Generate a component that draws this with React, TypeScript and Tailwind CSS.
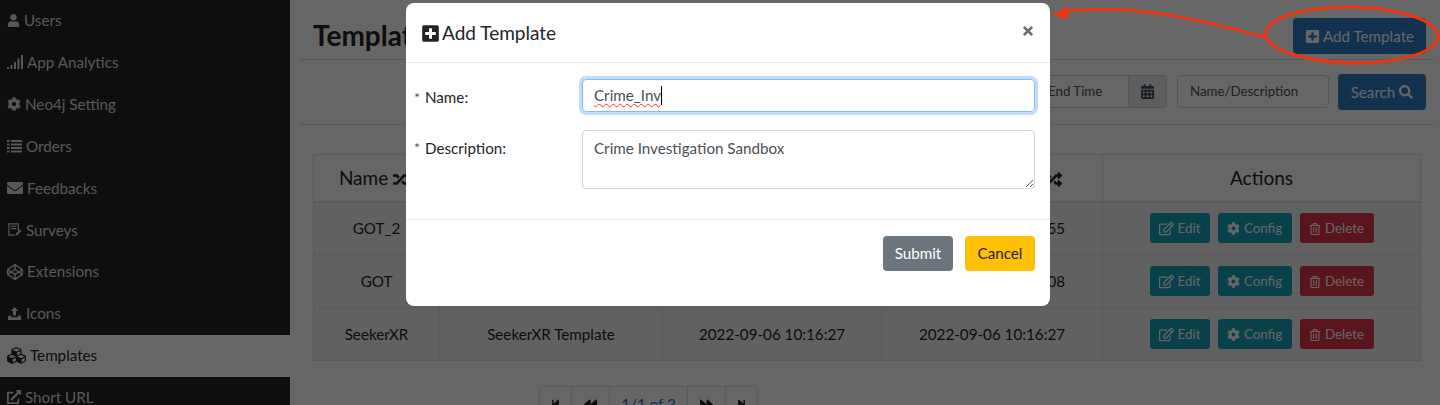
import type { ReactNode } from "react";
import {
  FaBackward, FaCalendarAlt, FaCodepen, FaCog, FaCubes, FaEnvelope, FaExternalLinkAlt, FaForward,
  FaPlusSquare, FaRandom, FaRegEdit, FaRegTrashAlt, FaSearch,
  FaStepBackward, FaStepForward, FaTimes, FaUser,
} from "react-icons/fa";

function SignalIcon() {
  return (
    <svg viewBox="0 0 16 14" className="w-[16px] h-[14px]" fill="currentColor">
      <rect x="0" y="12" width="2" height="2" />
      <rect x="3.5" y="10" width="2" height="4" />
      <rect x="7" y="7" width="2" height="7" />
      <rect x="10.5" y="3.5" width="2" height="10.5" />
      <rect x="14" y="0" width="2" height="14" />
    </svg>
  );
}

function ListIcon() {
  return (
    <svg viewBox="0 0 15 14" className="w-[15px] h-[14px]" fill="currentColor">
      <path d="M0 1h2.5v2H0zM4 1h11v2H4zM0 4.5h2.5v2H0zM4 4.5h11v2H4zM0 8h2.5v2H0zM4 8h11v2H4zM0 11.5h2.5v2H0zM4 11.5h11v2H4z" />
    </svg>
  );
}

function SurveyIcon() {
  return (
    <svg viewBox="0 0 16 16" className="w-[15px] h-[16px]" fill="none" stroke="currentColor" strokeWidth="1.2">
      <path d="M12 9V1.5H2v12h6" />
      <path d="M4 4h6M4 6.5h6" />
      <path d="M9 14l.6-2.4 4.2-4.2 1.6 1.6-4.2 4.2z" fill="currentColor" stroke="none" />
    </svg>
  );
}

function UploadIcon() {
  return (
    <svg viewBox="0 0 16 16" className="w-[15px] h-[15px]" fill="currentColor">
      <path d="M8 1l4 4.4H9.6V10H6.4V5.4H4z" />
      <path d="M1 10.5h3.6V12h6.8v-1.5H15V15H1z" />
    </svg>
  );
}

const sideItems: { label: string; icon: ReactNode; active?: boolean }[] = [
  { label: "Users", icon: <FaUser size={13} /> },
  { label: "App Analytics", icon: <SignalIcon /> },
  { label: "Neo4j Setting", icon: <FaCog size={14} /> },
  { label: "Orders", icon: <ListIcon /> },
  { label: "Feedbacks", icon: <FaEnvelope size={16} /> },
  { label: "Surveys", icon: <SurveyIcon /> },
  { label: "Extensions", icon: <FaCodepen size={16} /> },
  { label: "Icons", icon: <UploadIcon /> },
  { label: "Templates", icon: <FaCubes size={19} />, active: true },
  { label: "Short URL", icon: <FaExternalLinkAlt size={14} /> },
];

const rows = [
  { name: "GOT_2", desc: "GOT_2 Template", created: "2022-09-06 10:20:55", updated: "2022-09-06 10:20:55" },
  { name: "GOT", desc: "GOT Template", created: "2022-09-06 10:18:08", updated: "2022-09-06 10:18:08" },
  { name: "SeekerXR", desc: "SeekerXR Template", created: "2022-09-06 10:16:27", updated: "2022-09-06 10:16:27" },
];

function Sidebar() {
  return (
    <aside className="w-[290px] shrink-0 bg-[#232323]">
      {sideItems.map((item) => (
        <div
          key={item.label}
          className={
            item.active
              ? "h-[41.9px] pl-[7px] pb-[1px] flex items-center gap-[4px] bg-white text-[#212529]"
              : "h-[41.9px] pl-[7px] pb-[1px] flex items-center gap-[4px] text-[#dcdcdc]"
          }
        >
          {item.icon}
          <span>{item.label}</span>
        </div>
      ))}
    </aside>
  );
}

function RowActions() {
  return (
    <div className="flex justify-center gap-2 text-[13.3px] text-white">
      <button className="w-[60px] h-[30px] pt-[1px] flex items-center justify-center gap-1 rounded-[3px] bg-[#17a2b8]">
        <FaRegEdit size={15} /> Edit
      </button>
      <button className="w-[74px] h-[30px] pt-[1px] flex items-center justify-center gap-1 rounded-[3px] bg-[#17a2b8]">
        <FaCog size={13} /> Config
      </button>
      <button className="w-[74px] h-[30px] pt-[1px] flex items-center justify-center gap-1 rounded-[3px] bg-[#dc3545]">
        <FaRegTrashAlt size={12} /> Delete
      </button>
    </div>
  );
}

function Pagination() {
  return (
    <div className="ml-[226px] mt-[25px] w-[219px] h-[36px] flex border border-[#dee2e6] rounded-[4px] text-[#212529]">
      <div className="w-[32px] flex items-center justify-center border-r border-[#dee2e6]"><FaStepBackward size={11} /></div>
      <div className="w-[38px] flex items-center justify-center border-r border-[#dee2e6]"><FaBackward size={13} /></div>
      <div className="w-[78px] flex items-center justify-center border-r border-[#dee2e6] text-[#1f6fd0]">1/1 of 3</div>
      <div className="w-[38px] flex items-center justify-center border-r border-[#dee2e6]"><FaForward size={13} /></div>
      <div className="flex-1 flex items-center justify-center"><FaStepForward size={11} /></div>
    </div>
  );
}

function MainContent() {
  return (
    <main className="flex-1 pl-[10px] pr-[5px] text-[#212529]">
      <div className="h-[60px] flex items-center justify-between pl-[13px] pr-[9px] border-b border-[#dee2e6]">
        <h1 className="text-[28px] font-bold mt-[10px]">Templates</h1>
        <button className="w-[133px] h-[36px] mt-[13px] flex items-center justify-center gap-[3px] rounded-[4px] bg-[#2f7ac2] text-white">
          <FaPlusSquare size={15} /> Add Template
        </button>
      </div>
      <div className="h-[65px] flex items-center justify-end pr-[9px] border-b border-[#dee2e6] text-[13.3px]">
        <div className="w-[130px] h-[33px] mb-[2px] flex border border-[#ced4da] rounded-[4px] text-[#495057]">
          <div className="flex-1 pl-[10px] pt-[2px] flex items-center justify-start">End Time</div>
          <div className="w-[38px] flex items-center justify-center bg-[#e9ecef] border-l border-[#ced4da] rounded-r-[4px]">
            <FaCalendarAlt size={15} />
          </div>
        </div>
        <div className="w-[152px] h-[33px] ml-[10px] mb-[2px] pl-[12px] pt-[2px] flex items-center border border-[#ced4da] rounded-[4px] text-[#495057]">
          Name/Description
        </div>
        <button className="w-[88px] h-[36px] ml-[9px] flex items-center justify-center gap-1 rounded-[4px] bg-[#2f7ac2] text-white text-[15.2px]">
          Search <FaSearch size={14} />
        </button>
      </div>
      <div className="ml-[13px] mr-[14px] mt-[29px]">
        <table className="w-full table-fixed border-collapse text-center border border-[#dee2e6]">
          <thead>
            <tr className="h-[47px] text-[19px]">
              <th className="w-[126px] pr-[4px] font-normal border border-[#dee2e6] border-b-2">
                Name <FaRandom size={17} className="inline" />
              </th>
              <th className="w-[223px] font-normal border border-[#dee2e6] border-b-2">Description</th>
              <th className="w-[219px] font-normal border border-[#dee2e6] border-b-2">Create Time</th>
              <th className="w-[221px] font-normal border border-[#dee2e6] border-b-2 pl-[12px]">
                Update Time <FaRandom size={17} className="inline" />
              </th>
              <th className="font-normal border border-[#dee2e6] border-b-2">Actions</th>
            </tr>
          </thead>
          <tbody>
            {rows.map((row) => (
              <tr key={row.name} className="h-[53px] bg-black/5">
                <td className="border border-[#dee2e6]">{row.name}</td>
                <td className="border border-[#dee2e6]">{row.desc}</td>
                <td className="border border-[#dee2e6]">{row.created}</td>
                <td className="border border-[#dee2e6]">{row.updated}</td>
                <td className="border border-[#dee2e6]"><RowActions /></td>
              </tr>
            ))}
          </tbody>
        </table>
        <Pagination />
      </div>
    </main>
  );
}

function TemplateModal() {
  return (
    <div className="absolute left-[406px] top-[3px] w-[644px] h-[303px] bg-white rounded-[8px] text-[#212529] flex flex-col">
      <div className="h-[60px] pt-[1px] flex items-center justify-between pl-[15px] pr-[15px] border-b border-[#e9ecef]">
        <div className="flex items-center gap-[2px] text-[19px]">
          <FaPlusSquare size={19} /> Add Template
        </div>
        <FaTimes size={14} className="text-[#6b6b6b] mb-[4px]" />
      </div>
      <div className="h-[157px] pt-[16px] pl-[8px] pr-[15px] border-b border-[#e9ecef]">
        <div className="flex">
          <div className="w-[168px] h-[33px] pt-[3px] flex items-center gap-[5px]">
            <span className="text-[#555] text-[14px]">*</span> Name:
          </div>
          <div className="flex-1 h-[33px] pl-[11px] flex items-center border border-[#80bdff] rounded-[4px] ring-[3px] ring-[#c2dbfe] text-[#495057]">
            <span className="underline decoration-wavy decoration-red-500 decoration-1 underline-offset-2">Crime_Inv</span>
            <span className="w-px h-[19px] bg-black"></span>
          </div>
        </div>
        <div className="flex mt-[18px]">
          <div className="w-[168px] pt-[7px] flex items-start gap-[5px]">
            <span className="text-[#555] text-[14px]">*</span> Description:
          </div>
          <textarea
            readOnly
            value="Crime Investigation Sandbox"
            className="flex-1 h-[59px] px-[11px] py-[6px] border border-[#ced4da] rounded-[4px] text-[#495057] outline-none"
          />
        </div>
      </div>
      <div className="flex-1 flex justify-end gap-[12px] pt-[16px] pr-[15px]">
        <button className="w-[70px] h-[35px] rounded-[4px] bg-[#6c757d] text-white">Submit</button>
        <button className="w-[70px] h-[35px] rounded-[4px] bg-[#ffc107]">Cancel</button>
      </div>
    </div>
  );
}

export default function App() {
  return (
    <div className="relative w-[1440px] h-[405px] overflow-hidden flex bg-white font-['Lato',sans-serif] text-[15.2px]">
      <Sidebar />
      <MainContent />
      <div className="absolute inset-0 bg-black/60"></div>
      <TemplateModal />
      <svg className="absolute left-0 top-0" width="1440" height="405" fill="none">
        <ellipse cx="1352" cy="35" rx="86" ry="28" stroke="#f0330f" strokeWidth="3" transform="rotate(1 1352 35)" />
        <path d="M1265 37C1200 20 1130 2 1062 12" stroke="#f0330f" strokeWidth="3" />
        <path d="M1052 15L1068 6L1067 19Z" fill="#f0330f" />
      </svg>
    </div>
  );
}
